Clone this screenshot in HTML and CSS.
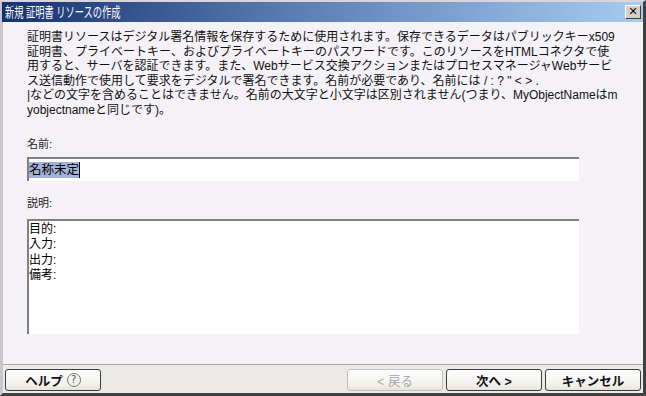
FILE: index.html
```html
<!DOCTYPE html>
<html lang="ja">
<head>
    <meta charset="UTF-8">
    <meta name="viewport" content="width=device-width, initial-scale=1.0">
    <title>新規 証明書 リソースの作成</title>
    <link rel="stylesheet" href="styles.css">
</head>
<body>
    <div class="window">
        <div class="titlebar">
            <span class="title">新規&nbsp;証明書&nbsp;リソースの作成</span>
            <span class="close-btn">✕</span>
        </div>
        <div class="content">
            <p class="intro">証明書リソースはデジタル署名情報を保存するために使用されます。保存できるデータはパブリックキーx509<br>証明書、プライベートキー、およびプライベートキーのパスワードです。このリソースをHTMLコネクタで使<br>用すると、サーバを認証できます。また、Webサービス交換アクションまたはプロセスマネージャWebサービ<br>ス送信動作で使用して要求をデジタルで署名できます。名前が必要であり、名前には / : ? " &lt; &gt; .<br>|などの文字を含めることはできません。名前の大文字と小文字は区別されません(つまり、MyObjectNameはm<br>yobjectnameと同じです)。</p>
            <div class="field-label">名前:</div>
            <div class="text-input"><span class="selected">名称未定</span><span class="caret"></span></div>
            <div class="field-label desc-label">説明:</div>
            <div class="text-area">目的:<br>入力:<br>出力:<br>備考:</div>
        </div>
        <div class="footer">
            <button class="btn help-btn">ヘルプ <span class="help-icon">?</span></button>
            <div class="nav-buttons">
                <button class="btn" disabled>&lt; 戻る</button>
                <button class="btn">次へ &gt;</button>
                <button class="btn">キャンセル</button>
            </div>
        </div>
    </div>
</body>
</html>
```

FILE: styles.css
```css
body {
    margin: 0;
    font-family: "Liberation Sans", "Noto Sans CJK JP", sans-serif;
    background: #f4f2f6;
}
.window {
    width: 646px;
    height: 396px;
    box-sizing: border-box;
    border-top: 2px solid #d8d6dc;
    border-left: 3px solid #c8c6cc;
    border-right: 3px solid #404040;
    border-bottom: 3px solid #404040;
    display: flex;
    flex-direction: column;
    background: #f4f2f6;
}
.titlebar {
    height: 20px;
    margin-left: -1px;
    background: linear-gradient(to right, #16306e, #5a7cb4 45%, #a8cbf1);
    display: flex;
    align-items: center;
    justify-content: space-between;
    padding: 0 2px 0 3px;
}
.title {
    color: #fff;
    font-size: 14px;
    line-height: 20px;
    display: inline-block;
    transform: scaleX(0.66);
    transform-origin: left center;
}
.close-btn {
    width: 16px;
    height: 14px;
    box-sizing: border-box;
    background: #d4d0c8;
    border: 1px solid;
    border-color: #fff #404040 #404040 #fff;
    font-size: 11px;
    line-height: 12px;
    text-align: center;
    font-weight: bold;
    color: #000;
    font-family: "DejaVu Sans", sans-serif;
}
.content {
    height: 342px;
    padding: 0 0 0 24px;
    box-sizing: border-box;
}
.intro {
    margin: 8px 0 0;
    font-size: 12px;
    line-height: 14.6px;
    color: #111;
    white-space: nowrap;
}
.field-label {
    font-size: 11px;
    line-height: 14px;
    color: #222;
    margin-top: 19px;
}
.desc-label {
    margin-top: 15px;
}
.text-input {
    margin-top: 6px;
    width: 552px;
    height: 24px;
    box-sizing: border-box;
    background: #fff;
    border-top: 2px solid #808080;
    border-left: 2px solid #808080;
    display: flex;
    align-items: center;
    font-size: 12.5px;
}
.selected {
    background: #a3b2d9;
    color: #000;
    line-height: 16px;
}
.caret {
    width: 1px;
    height: 16px;
    background: #000;
}
.text-area {
    margin-top: 9px;
    width: 552px;
    height: 115px;
    box-sizing: border-box;
    background: #fff;
    border-top: 2px solid #808080;
    border-left: 2px solid #808080;
    padding-top: 1px;
    font-size: 12px;
    line-height: 15.5px;
    color: #000;
}
.footer {
    flex: 1;
    background: #eceae7;
    border-top: 1px solid #a8a6a4;
    display: flex;
    justify-content: space-between;
    align-items: flex-start;
    padding: 4px 2px 0 2px;
}
.nav-buttons {
    display: flex;
    gap: 3px;
}
.btn {
    width: 96px;
    height: 22px;
    padding: 0;
    border: 1px solid #3c3c3c;
    border-radius: 3px;
    background: linear-gradient(to bottom, #ffffff, #f0efec 80%, #e4e2de);
    font-family: "Liberation Sans", "Noto Sans CJK JP", sans-serif;
    font-size: 12.5px;
    font-weight: bold;
    color: #111;
    display: flex;
    align-items: center;
    justify-content: center;
    gap: 4px;
}
.btn:disabled {
    border-color: #c4c2c0;
    color: #a8a8a8;
    font-weight: normal;
}
.help-icon {
    width: 14px;
    height: 14px;
    box-sizing: border-box;
    border: 1px solid #777;
    border-radius: 50%;
    font-size: 10px;
    line-height: 12px;
    font-weight: normal;
    color: #555;
    text-align: center;
    font-family: "DejaVu Sans", sans-serif;
}
```
